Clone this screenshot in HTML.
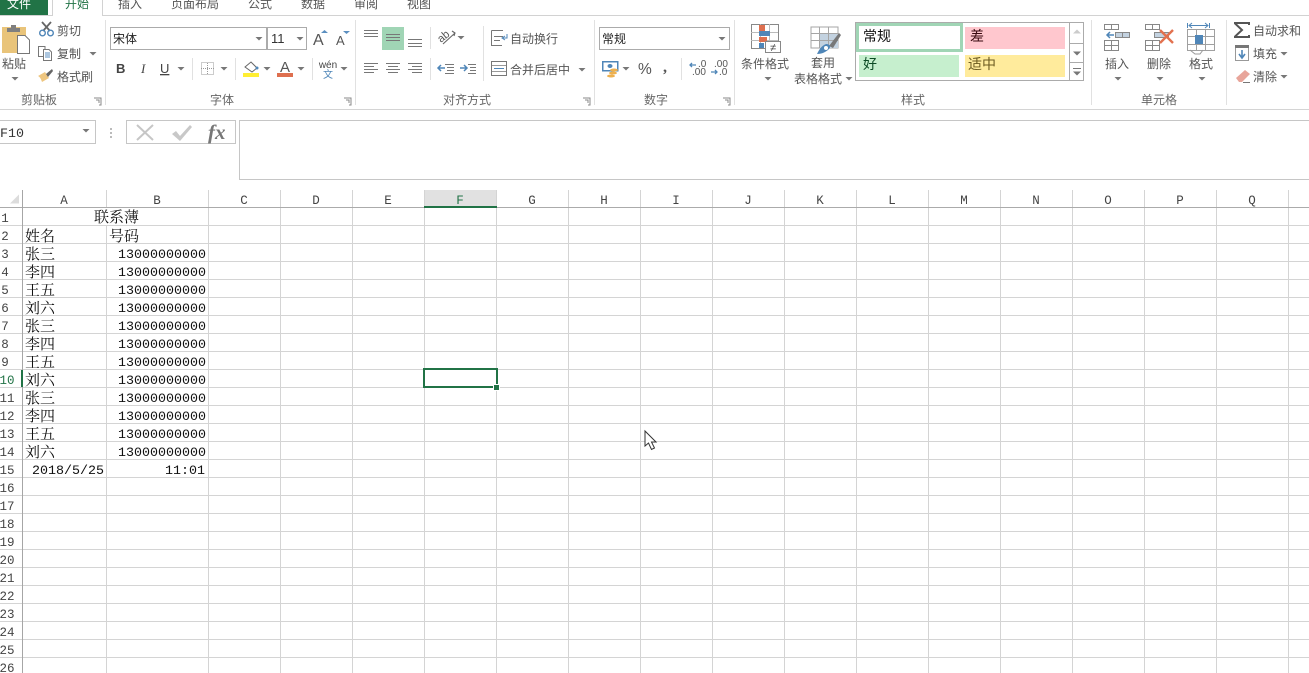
<!DOCTYPE html>
<html lang="zh"><head><meta charset="utf-8"><title>Excel</title>
<style>
html,body{margin:0;padding:0;background:#fff;width:1309px;height:673px;overflow:hidden}
svg{display:block}
text{white-space:pre}
.u{font:12px "Liberation Sans","Noto Sans CJK SC",sans-serif;fill:#555}
.l{font:12px "Liberation Sans","Noto Sans CJK SC",sans-serif;fill:#666}
.c{font:15px "Liberation Serif","Noto Serif CJK SC",serif;fill:#111}
.n{font:13.33px "Liberation Mono",monospace;fill:#111}
.h{font:12.5px "Liberation Mono",monospace;fill:#444}
.m{text-anchor:middle}.e{text-anchor:end}
.r{shape-rendering:crispEdges}
</style></head><body>
<svg width="1309" height="673" viewBox="0 0 1309 673" xmlns="http://www.w3.org/2000/svg">
<defs><path id="k" d="M-3.500 0H3.500L0 3.500Z" fill="#777"/>
<path id="la" d="M0 0H7V7M2 2H5V5M5 7H7V5" fill="none" stroke="#888"/></defs>

<g class="r">
<rect x="0" y="0" width="48" height="15" fill="#217346"/>
<rect x="0" y="15" width="1309" height="1" fill="#d2d2d2"/>
<rect x="52" y="0" width="51" height="16" fill="#fff"/>
<rect x="52" y="0" width="1" height="16" fill="#d2d2d2"/>
<rect x="102" y="0" width="1" height="16" fill="#d2d2d2"/>
<rect x="0" y="109" width="1309" height="1" fill="#d4d4d4"/>
<path d="M105.500 20V105M355.500 20V105M594.500 20V105M734.500 20V105M1091.500 20V105M1226.500 20V105" stroke="#e1e1e1"/>
<path d="M192.500 58V80M235.500 58V80M312.500 58V80M430.500 27V49M430.500 58V80M483.500 26V81M681.500 58V80" stroke="#e1e1e1"/>
</g>
<text class="u" x="7" y="8" style="fill:#fff">文件</text>
<text class="u" x="65" y="8" style="fill:#217346">开始</text>
<text class="u" x="118" y="8">插入</text>
<text class="u" x="171" y="8">页面布局</text>
<text class="u" x="248" y="8">公式</text>
<text class="u" x="301" y="8">数据</text>
<text class="u" x="354" y="8">审阅</text>
<text class="u" x="407" y="8">视图</text>

<!-- clipboard -->
<rect class="r" x="2" y="27" width="24" height="26" fill="#e9c47a"/>
<path d="M7 32V28H11V25H16V28H20V32Z" fill="#7f7f7f"/>
<path d="M17.500 35.500H25L29.500 40V53.500H17.500Z" fill="#fff" stroke="#777"/>
<text class="u" x="2" y="68">粘贴</text><use href="#k" x="15" y="77"/>
<path d="M42 22L50 31M51 22L43 31" stroke="#666" stroke-width="1.800" fill="none"/>
<circle cx="42.500" cy="33" r="2.800" fill="none" stroke="#4f86b8" stroke-width="1.400"/>
<circle cx="50.500" cy="33" r="2.800" fill="none" stroke="#4f86b8" stroke-width="1.400"/>
<text class="u" x="57" y="35">剪切</text>
<path d="M38.500 46.500H45V56.500H38.500Z" fill="#fff" stroke="#777"/>
<path d="M43.500 49.500H49L51.500 52V60.500H43.500Z" fill="#fff" stroke="#777"/>
<path d="M45 53H50M45 55H50M45 57H50" stroke="#5b8fc0"/>
<text class="u" x="57" y="58">复制</text><use href="#k" x="93" y="52"/>
<path d="M38 76L45 72L49 78L42 82C41 79 40 77 38 76Z" fill="#eec680"/>
<path d="M46 74L52 69L53 71L48 77Z" fill="#666"/>
<text class="u" x="57" y="81">格式刷</text>
<text class="l" x="21" y="104">剪贴板</text><use href="#la" x="94" y="98"/>

<!-- font -->
<g class="r" fill="#fff" stroke="#ababab">
<rect x="110.500" y="27.500" width="156" height="22"/>
<rect x="267.500" y="27.500" width="39" height="22"/>
<rect x="599.500" y="27.500" width="130" height="22"/>
</g>
<text class="u" x="113" y="43" style="fill:#222">宋体</text><use href="#k" x="259" y="37"/>
<text x="271" y="43" style="font:13px 'Liberation Sans',sans-serif;fill:#333">11</text><use href="#k" x="300" y="37"/>
<text x="313" y="45" style="font:16px 'Liberation Sans',sans-serif;fill:#555">A</text>
<path d="M321 33H328L324.500 30Z" fill="#5b8fc0"/>
<text x="336" y="45" style="font:13px 'Liberation Sans',sans-serif;fill:#555">A</text>
<path d="M343 31H350L346.500 34Z" fill="#5b8fc0"/>
<text x="116" y="73" style="font:bold 13px 'Liberation Sans',sans-serif;fill:#444">B</text>
<text x="141" y="73" style="font:italic 13px 'Liberation Serif',serif;fill:#444">I</text>
<text x="160" y="73" style="font:13px 'Liberation Sans',sans-serif;fill:#444;text-decoration:underline">U</text>
<use href="#k" x="181" y="67"/>
<rect x="201.500" y="62.500" width="12" height="12" fill="none" stroke="#999" stroke-dasharray="1 1"/>
<path d="M207.500 63V75M201 68.500H214" stroke="#999" stroke-dasharray="1 1"/>
<use href="#k" x="224" y="67"/>
<path d="M245 67L251 62L257 68L252 72Z" fill="#fff" stroke="#666"/><circle cx="257" cy="68" r="1.500" fill="#4f86b8"/>
<rect class="r" x="243" y="73" width="16" height="4" fill="#ffee33"/>
<use href="#k" x="267" y="67"/>
<text class="m" x="285" y="72" style="font:15px 'Liberation Sans',sans-serif;fill:#555">A</text>
<rect class="r" x="277" y="73" width="16" height="4" fill="#de6f4f"/>
<use href="#k" x="301" y="67"/>
<text class="m" x="328" y="68" style="font:10px 'Liberation Sans',sans-serif;fill:#444">wén</text>
<text class="m" x="328" y="78" style="font:10px 'Noto Sans CJK SC',sans-serif;fill:#4f86b8">文</text>
<use href="#k" x="344" y="67"/>
<text class="l" x="210" y="104">字体</text><use href="#la" x="344" y="98"/>

<!-- alignment -->
<rect class="r" x="382" y="27" width="22" height="23" fill="#a0d5b5"/>
<path class="r" d="M364 30.500H378M364 33.500H378M364 36.500H378M386 34.500H400M386 37.500H400M386 40.500H400M408 39.500H422M408 43.500H422M408 46.500H422M364 63.500H378M364 66.500H374M364 69.500H378M364 72.500H374M386 63.500H400M388 66.500H398M386 69.500H400M388 72.500H398M408 63.500H422M412 66.500H422M408 69.500H422M412 72.500H422M445 64.500H454M447 67.500H454M447 70.500H454M445 73.500H454M468 64.500H476M470 67.500H476M470 70.500H476M468 73.500H476" stroke="#777"/>
<text x="0" y="0" transform="translate(441 43) rotate(-40)" style="font:11px 'Liberation Sans',sans-serif;fill:#555">ab</text>
<path d="M443 44L455 33M452 31L455 33L454 36" fill="none" stroke="#666" stroke-width="1.100"/>
<use href="#k" x="461" y="36"/>
<path d="M445 68H438M441 65L438 68L441 71" stroke="#4f86b8" stroke-width="1.500" fill="none"/>
<path d="M460 68H467M464 65L467 68L464 71" stroke="#4f86b8" stroke-width="1.500" fill="none"/>
<path class="r" d="M491.500 30.500H503M491.500 30.500V45.500H502M494 36.500H503M494 40.500H500" stroke="#777" fill="none"/>
<path d="M507 34V38H503M505 36L502 38L505 40" stroke="#4f86b8" fill="none"/>
<text class="u" x="510" y="43">自动换行</text>
<rect class="r" x="491.500" y="61.500" width="15" height="14" fill="none" stroke="#777"/>
<path class="r" d="M492 65.500H506M492 71.500H506" stroke="#999"/>
<path class="r" d="M494 68.500H504" stroke="#4f86b8"/>
<text class="u" x="510" y="74">合并后居中</text><use href="#k" x="582" y="68"/>
<text class="l" x="443" y="104">对齐方式</text><use href="#la" x="583" y="98"/>

<!-- number -->
<text class="u" x="602" y="43" style="fill:#222">常规</text><use href="#k" x="722" y="37"/>
<rect class="r" x="602.500" y="61.500" width="15" height="9" fill="#fff" stroke="#4f86b8" stroke-width="1.500"/>
<ellipse cx="610" cy="66" rx="2.500" ry="2" fill="#4f86b8"/>
<ellipse cx="614" cy="70" rx="4" ry="1.500" fill="#edb04f"/><ellipse cx="613" cy="73" rx="4" ry="1.500" fill="#edb04f"/><ellipse cx="611" cy="76" rx="4" ry="1.500" fill="#edb04f"/>
<use href="#k" x="626" y="67"/>
<text x="638" y="74" style="font:15.500px 'Liberation Sans',sans-serif;fill:#555">%</text>
<text x="663" y="72" style="font:bold 16px 'Liberation Serif',serif;fill:#555">,</text>
<text x="698" y="67" style="font:10px 'Liberation Sans',sans-serif;fill:#555">.0</text>
<text x="692" y="75" style="font:10px 'Liberation Sans',sans-serif;fill:#555">.00</text>
<path d="M696 65H690M692 63L690 65L692 67" stroke="#4f86b8" fill="none" stroke-width="1.300"/>
<text x="714" y="67" style="font:10px 'Liberation Sans',sans-serif;fill:#555">.00</text>
<text x="719" y="75" style="font:10px 'Liberation Sans',sans-serif;fill:#555">.0</text>
<path d="M711 72H717M715 70L717 72L715 74" stroke="#4f86b8" fill="none" stroke-width="1.300"/>
<text class="l" x="644" y="104">数字</text><use href="#la" x="723" y="98"/>

<!-- styles -->
<g class="r">
<rect x="751.500" y="24.500" width="27" height="24" fill="#fff" stroke="#888"/>
<path d="M751 32.500H778M751 40.500H778M760.500 24V48M769.500 24V48" stroke="#bbb"/>
<rect x="759" y="25" width="6" height="6" fill="#de6f4f"/>
<rect x="759" y="31" width="11" height="5" fill="#4f86b8"/>
<rect x="759" y="37" width="8" height="5" fill="#de6f4f"/>
<rect x="759" y="43" width="5" height="5" fill="#4f86b8"/>
<rect x="765.500" y="41.500" width="15" height="11" fill="#fff" stroke="#888"/>
<rect x="811" y="27" width="27" height="21" fill="#fff" stroke="#a5a5a5"/>
<rect x="819" y="34" width="19" height="14" fill="#c3d2e0"/>
<path d="M811 33.500H838M811 40.500H838M819.500 27V48M828.500 27V48" stroke="#a5a5a5"/>
</g>
<text class="m" x="773" y="51" style="font:11px 'Liberation Sans',sans-serif;fill:#444">≠</text>
<path d="M829 46L839 33L841 35L833 48Z" fill="#777"/>
<path d="M817 54C819 50 821 46 826 44C830 44 831 47 829 49C826 52 822 54 817 54Z" fill="#4f86b8"/>
<circle cx="826" cy="48" r="2" fill="#fff"/>
<text class="u" x="741" y="68">条件格式</text><use href="#k" x="768" y="77"/>
<text class="u" x="811" y="67">套用</text>
<text class="u" x="794" y="83">表格格式</text><use href="#k" x="849" y="77"/>
<g class="r">
<rect x="855.500" y="22.500" width="228" height="58" fill="#fff" stroke="#ababab"/>
<rect x="857.500" y="24.500" width="104" height="26" fill="#fff" stroke="#a0d5b5" stroke-width="3"/>
<rect x="965" y="27" width="100" height="22" fill="#ffc7ce"/>
<rect x="859" y="55" width="100" height="22" fill="#c6efce"/>
<rect x="965" y="55" width="100" height="22" fill="#ffeb9c"/>
<path d="M1069.500 23V80M1070 43.500H1083M1070 62.500H1083" stroke="#ababab"/>
</g>
<path d="M1073 33.500H1081L1077 29.500Z" fill="#ccc"/>
<path d="M1073 51.500H1081L1077 55.500Z" fill="#777"/>
<path class="r" d="M1073 68.500H1081" stroke="#777"/><path d="M1073 71.500H1081L1077 75.500Z" fill="#777"/>
<text x="863" y="41" style="font:14px 'Noto Sans CJK SC',sans-serif;fill:#111">常规</text>
<text x="970" y="41" style="font:14px 'Noto Sans CJK SC',sans-serif;fill:#3a0a10">差</text>
<text x="863" y="69" style="font:14px 'Noto Sans CJK SC',sans-serif;fill:#0b4a24">好</text>
<text x="968" y="69" style="font:14px 'Noto Sans CJK SC',sans-serif;fill:#6b5a20">适中</text>
<text class="l" x="901" y="104">样式</text>

<!-- cells -->
<g class="r" fill="none" stroke="#888">
<path d="M1104.500 24.500H1118.500V29.500H1104.500ZM1111.500 24V30"/>
<rect x="1115.500" y="32.500" width="14" height="5" fill="#c3d2e0"/><path d="M1122.500 32V38"/>
<path d="M1104.500 40.500H1118.500V50.500H1104.500ZM1111.500 40V50M1104 45.500H1118"/>
<path d="M1145.500 24.500H1159.500V29.500H1145.500ZM1152.500 24V30"/>
<rect x="1154.500" y="32.500" width="14" height="5" fill="#c3d2e0"/>
<path d="M1145.500 40.500H1159.500V50.500H1145.500ZM1152.500 40V50M1145 45.500H1159"/>
<path d="M1187.500 29.500H1214.500V50.500H1187.500ZM1187 36.500H1214M1187 44.500H1214M1196.500 29V50M1205.500 29V50" stroke="#a0a0a0"/>
<rect x="1195" y="35" width="8" height="9" fill="#4f86b8" stroke="none"/>
<path d="M1187.500 23V28M1209.500 23V28" stroke="#4f86b8"/><path d="M1189 25.500H1208" stroke="#4f86b8"/>
</g>
<path d="M1192 23L1189 25.500L1192 28M1205 23L1208 25.500L1205 28" fill="none" stroke="#4f86b8"/>
<path d="M1114 35H1107M1110 32L1107 35L1110 38" stroke="#4f86b8" stroke-width="1.500" fill="none"/>
<path d="M1160 30L1173 43M1173 30L1160 43" stroke="#e2714f" stroke-width="2.400"/>
<path d="M1190 50L1195 54H1200L1203 50" fill="none" stroke="#999"/>
<text class="u" x="1105" y="68">插入</text><use href="#k" x="1118" y="77"/>
<text class="u" x="1147" y="68">删除</text><use href="#k" x="1160" y="77"/>
<text class="u" x="1189" y="68">格式</text><use href="#k" x="1202" y="77"/>
<text class="l" x="1141" y="104">单元格</text>
<path d="M1249 25V23H1235V23.500L1242 30L1235 36.500V37H1249V35" fill="none" stroke="#555" stroke-width="2"/>
<text class="u" x="1253" y="35">自动求和</text>
<rect class="r" x="1235.500" y="46.500" width="13" height="14" fill="#fff" stroke="#999"/><rect class="r" x="1235" y="45" width="14" height="3" fill="#777"/>
<path d="M1242 50V57M1239 54L1242 58L1245 54" fill="none" stroke="#4f86b8" stroke-width="1.600"/>
<text class="u" x="1253" y="58">填充</text><use href="#k" x="1284" y="52"/>
<path d="M1236 78L1245 70L1250 74L1242 82H1239Z" fill="#e8a59a"/>
<path class="r" d="M1243 82.500H1250" stroke="#777"/>
<text class="u" x="1253" y="81">清除</text><use href="#k" x="1284" y="75"/>

<!-- formula bar -->
<g class="r" fill="#fff" stroke="#c6c6c6">
<rect x="-1.500" y="120.500" width="97" height="23"/>
<rect x="126.500" y="120.500" width="109" height="23"/>
<rect x="239.500" y="120.500" width="1075" height="59"/>
</g>
<text x="0" y="137" style="font:13.330px 'Liberation Mono',monospace;fill:#333">F10</text>
<use href="#k" x="86" y="129"/>
<path class="r" d="M110 128h2v2h-2zM110 132h2v2h-2zM110 136h2v2h-2z" fill="#bbb"/>
<path d="M137 125L153 140M153 125L137 140" stroke="#c6c6c6" stroke-width="2"/>
<path d="M172 134L176 131L180 136L190 125L192 127L180 141Z" fill="#c8c8c8"/>
<text x="208" y="139" style="font:italic bold 21px 'Liberation Serif',serif;fill:#777">fx</text>

<!-- grid -->
<path class="r" stroke="#d4d4d4" d="M0 225.500H1309M0 243.500H1309M0 261.500H1309M0 279.500H1309M0 297.500H1309M0 315.500H1309M0 333.500H1309M0 351.500H1309M0 369.500H1309M0 387.500H1309M0 405.500H1309M0 423.500H1309M0 441.500H1309M0 459.500H1309M0 477.500H1309M0 495.500H1309M0 513.500H1309M0 531.500H1309M0 549.500H1309M0 567.500H1309M0 585.500H1309M0 603.500H1309M0 621.500H1309M0 639.500H1309M0 657.500H1309M106.500 190V673M208.500 190V673M280.500 190V673M352.500 190V673M424.500 190V673M496.500 190V673M568.500 190V673M640.500 190V673M712.500 190V673M784.500 190V673M856.500 190V673M928.500 190V673M1000.500 190V673M1072.500 190V673M1144.500 190V673M1216.500 190V673M1288.500 190V673"/>
<rect class="r" x="106" y="208" width="1" height="17" fill="#fff"/>
<rect class="r" x="425" y="190" width="71" height="16" fill="#e1e1e1"/>
<rect class="r" x="0" y="207" width="1309" height="1" fill="#ababab"/>
<rect class="r" x="424" y="206" width="73" height="2" fill="#217346"/>
<rect class="r" x="22" y="190" width="1" height="483" fill="#a6a6a6"/>
<rect class="r" x="21" y="370" width="2" height="17" fill="#217346"/>
<path d="M10 203.500H19V194.500Z" fill="#dcdcdc"/>

<g class="h m">
<text x="64" y="204">A</text><text x="157" y="204">B</text><text x="244" y="204">C</text><text x="316" y="204">D</text><text x="388" y="204">E</text><text x="460" y="204" style="fill:#217346">F</text><text x="532" y="204">G</text><text x="604" y="204">H</text><text x="676" y="204">I</text><text x="748" y="204">J</text><text x="820" y="204">K</text><text x="892" y="204">L</text><text x="964" y="204">M</text><text x="1036" y="204">N</text><text x="1108" y="204">O</text><text x="1180" y="204">P</text><text x="1252" y="204">Q</text>
<text x="5" y="222">1</text><text x="5" y="240">2</text><text x="5" y="258">3</text><text x="5" y="276">4</text><text x="5" y="294">5</text><text x="5" y="312">6</text><text x="5" y="330">7</text><text x="5" y="348">8</text><text x="5" y="366">9</text>
<text x="7" y="384" style="fill:#217346">10</text><text x="7" y="402">11</text><text x="7" y="420">12</text><text x="7" y="438">13</text><text x="7" y="456">14</text><text x="7" y="474">15</text><text x="7" y="492">16</text><text x="7" y="510">17</text><text x="7" y="528">18</text><text x="7" y="546">19</text><text x="7" y="564">20</text><text x="7" y="582">21</text><text x="7" y="600">22</text><text x="7" y="618">23</text><text x="7" y="636">24</text><text x="7" y="654">25</text><text x="7" y="672">26</text>
</g>

<g class="c">
<text x="94" y="222">联系薄</text>
<text x="25" y="241">姓名</text><text x="109" y="241">号码</text>
<text x="25" y="259">张三</text><text x="25" y="277">李四</text><text x="25" y="295">王五</text><text x="25" y="313">刘六</text><text x="25" y="331">张三</text><text x="25" y="349">李四</text><text x="25" y="367">王五</text><text x="25" y="385">刘六</text><text x="25" y="403">张三</text><text x="25" y="421">李四</text><text x="25" y="439">王五</text><text x="25" y="457">刘六</text>
</g>
<g class="n e">
<text x="206" y="258">13000000000</text><text x="206" y="276">13000000000</text><text x="206" y="294">13000000000</text><text x="206" y="312">13000000000</text><text x="206" y="330">13000000000</text><text x="206" y="348">13000000000</text><text x="206" y="366">13000000000</text><text x="206" y="384">13000000000</text><text x="206" y="402">13000000000</text><text x="206" y="420">13000000000</text><text x="206" y="438">13000000000</text><text x="206" y="456">13000000000</text>
<text x="104" y="474">2018/5/25</text><text x="205" y="474">11:01</text>
</g>

<!-- selection -->
<rect class="r" x="424" y="369" width="73" height="18" fill="none" stroke="#217346" stroke-width="2"/>
<rect class="r" x="493" y="384" width="7" height="7" fill="#fff"/>
<rect class="r" x="494" y="385" width="5" height="5" fill="#217346"/>
<!-- cursor -->
<path d="M645 431V446L648.500 443L651.500 449.500L654.500 448L651.500 442H656Z" fill="#fff" stroke="#333"/>
</svg>
</body></html>
